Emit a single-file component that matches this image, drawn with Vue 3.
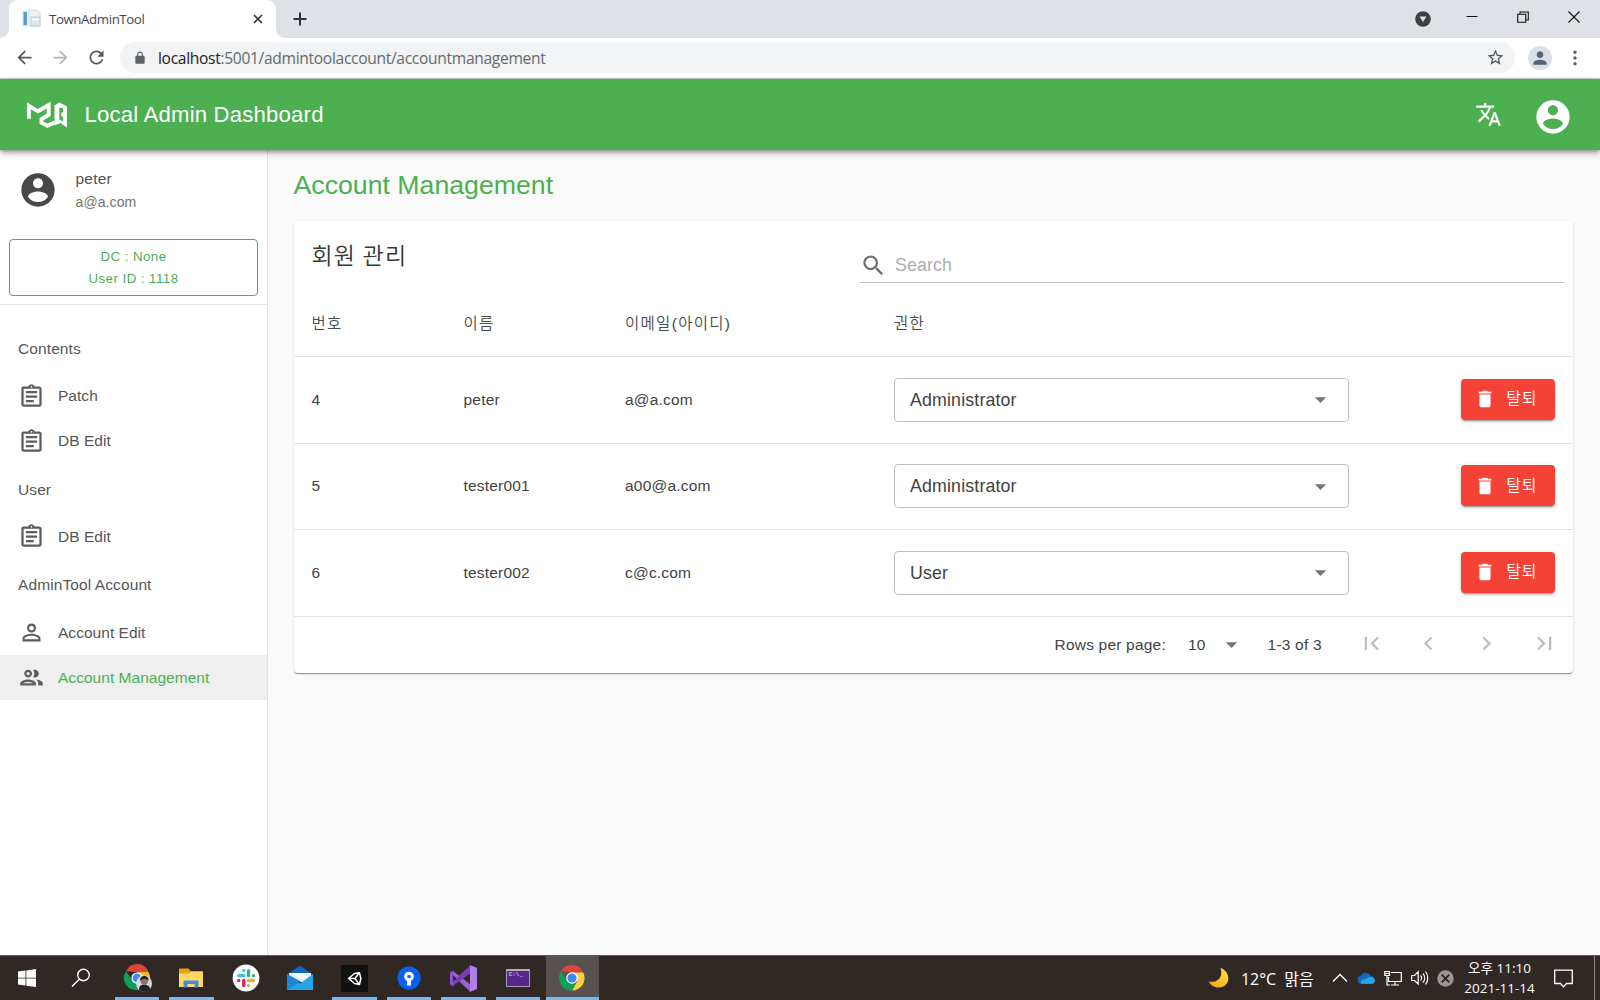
<script setup>
const icons = {
  account: 'M12 2C6.48 2 2 6.48 2 12s4.48 10 10 10 10-4.48 10-10S17.52 2 12 2zm0 3c1.66 0 3 1.34 3 3s-1.34 3-3 3-3-1.34-3-3 1.34-3 3-3zm0 14.2c-2.5 0-4.71-1.28-6-3.22.03-1.99 4-3.08 6-3.08 1.99 0 5.97 1.09 6 3.08-1.29 1.94-3.5 3.22-6 3.22z',
  translate: 'M12.87 15.07l-2.54-2.51.03-.03c1.74-1.94 2.98-4.17 3.71-6.53H17V4h-7V2H8v2H1v1.99h11.17C11.5 7.92 10.44 9.75 9 11.35 8.07 10.32 7.3 9.19 6.69 8h-2c.73 1.63 1.73 3.17 2.98 4.56l-5.09 5.02L4 19l5-5 3.11 3.11.76-2.04zM18.5 10h-2L12 22h2l1.12-3h4.75L21 22h2l-4.5-12zm-2.62 7l1.62-4.33L19.12 17h-3.24z',
  assignment: 'M7 15h7v2H7zm0-4h10v2H7zm0-4h10v2H7zm12-4h-4.18C14.4 1.84 13.3 1 12 1c-1.3 0-2.4.84-2.82 2H5c-.14 0-.27.01-.4.04-.39.08-.74.28-1.01.55-.18.18-.33.4-.43.64-.1.23-.16.49-.16.77v14c0 .27.06.54.16.78s.25.45.43.64c.27.27.62.47 1.01.55.13.02.26.03.4.03h14c1.1 0 2-.9 2-2V5c0-1.1-.9-2-2-2zm-7-.25c.41 0 .75.34.75.75s-.34.75-.75.75-.75-.34-.75-.75.34-.75.75-.75zM19 19H5V5h14v14z',
  person: 'M12 5.9c1.16 0 2.1.94 2.1 2.1s-.94 2.1-2.1 2.1S9.9 9.16 9.9 8s.94-2.1 2.1-2.1m0 9c2.97 0 6.1 1.46 6.1 2.1v1.1H5.9V17c0-.64 3.13-2.1 6.1-2.1M12 4C9.79 4 8 5.79 8 8s1.79 4 4 4 4-1.79 4-4-1.79-4-4-4zm0 9c-2.67 0-8 1.34-8 4v3h16v-3c0-2.66-5.33-4-8-4z',
  people: 'M9 13.75c-2.34 0-7 1.17-7 3.5V19h14v-1.75c0-2.33-4.66-3.5-7-3.5zM4.34 17c.84-.58 2.87-1.25 4.66-1.25s3.82.67 4.66 1.25H4.34zM9 12c1.93 0 3.5-1.57 3.5-3.5S10.93 5 9 5 5.5 6.57 5.5 8.5 7.07 12 9 12zm0-5c.83 0 1.5.67 1.5 1.5S9.83 10 9 10s-1.5-.67-1.5-1.5S8.17 7 9 7zm7.04 6.81c1.16.84 1.96 1.96 1.96 3.44V19h4v-1.75c0-2.02-3.5-3.17-5.96-3.44zM15 12c1.93 0 3.5-1.57 3.5-3.5S16.93 5 15 5c-.54 0-1.04.13-1.5.35.63.89 1 1.98 1 3.15s-.37 2.26-1 3.15c.46.22.96.35 1.5.35z',
  search: 'M15.5 14h-.79l-.28-.27C15.41 12.59 16 11.11 16 9.5 16 5.91 13.09 3 9.5 3S3 5.91 3 9.5 5.91 16 9.5 16c1.61 0 3.09-.59 4.23-1.57l.27.28v.79l5 4.99L20.49 19l-4.99-5zm-6 0C7.01 14 5 11.99 5 9.5S7.01 5 9.5 5 14 7.01 14 9.5 11.99 14 9.5 14z',
  trash: 'M6 19c0 1.1.9 2 2 2h8c1.1 0 2-.9 2-2V7H6v12zM19 4h-3.5l-1-1h-5l-1 1H5v2h14V4z',
  drop: 'M7 10l5 5 5-5z',
  lock: 'M18 8h-1V6c0-2.76-2.24-5-5-5S7 3.24 7 6v2H6c-1.1 0-2 .9-2 2v10c0 1.1.9 2 2 2h12c1.1 0 2-.9 2-2V10c0-1.1-.9-2-2-2zM8.9 8V6c0-1.71 1.39-3.1 3.1-3.1s3.1 1.39 3.1 3.1v2H8.9z',
  back: 'M20 11H7.83l5.59-5.59L12 4l-8 8 8 8 1.41-1.41L7.83 13H20v-2z',
  forward: 'M12 4l-1.41 1.41L16.17 11H4v2h12.17l-5.58 5.59L12 20l8-8z',
  reload: 'M17.65 6.35C16.2 4.9 14.21 4 12 4c-4.42 0-7.99 3.58-7.99 8s3.57 8 7.99 8c3.73 0 6.84-2.55 7.73-6h-2.08c-.82 2.33-3.04 4-5.65 4-3.31 0-6-2.69-6-6s2.69-6 6-6c1.66 0 3.14.69 4.22 1.78L13 11h7V4l-2.35 2.35z',
  star: 'M22 9.24l-7.19-.62L12 2 9.19 8.63 2 9.24l5.46 4.73L5.82 21 12 17.27 18.18 21l-1.63-7.03L22 9.24zM12 15.4l-3.76 2.27 1-4.28-3.32-2.88 4.38-.38L12 6.1l1.71 4.04 4.38.38-3.32 2.88 1 4.28L12 15.4z',
  user: 'M12 12c2.21 0 4-1.79 4-4s-1.79-4-4-4-4 1.79-4 4 1.79 4 4 4zm0 2c-2.67 0-8 1.34-8 4v2h16v-2c0-2.66-5.33-4-8-4z'
}
const nav = [
  { head: 'Contents' },
  { label: 'Patch', icon: icons.assignment },
  { label: 'DB Edit', icon: icons.assignment },
  { head: 'User' },
  { label: 'DB Edit', icon: icons.assignment },
  { head: 'AdminTool Account' },
  { label: 'Account Edit', icon: icons.person },
  { label: 'Account Management', icon: icons.people, active: true }
]
const rows = [
  { no: 4, name: 'peter', mail: 'a@a.com', role: 'Administrator' },
  { no: 5, name: 'tester001', mail: 'a00@a.com', role: 'Administrator' },
  { no: 6, name: 'tester002', mail: 'c@c.com', role: 'User' }
]
const pager = [
  'M18.41 16.59L13.82 12l4.59-4.59L17 6l-6 6 6 6zM6 6h2v12H6z',
  'M15.41 7.41L14 6l-6 6 6 6 1.41-1.41L10.83 12z',
  'M10 6L8.59 7.41 13.17 12l-4.58 4.59L10 18l6-6z',
  'M5.59 7.41L10.18 12l-4.59 4.59L7 18l6-6-6-6zM16 6h2v12h-2z'
]
</script>

<template>
  <div class="screen">
    <div class="tabs">
      <div class="tab">
        <svg class="fav" viewBox="0 0 20 20" width="20" height="20">
          <rect x="1" y="2" width="12" height="15" fill="#eef2f6" stroke="#d3dbe3" stroke-width=".7" />
          <rect x="1.5" y="3" width="3.4" height="13" fill="#4f9dcc" />
          <path d="M7 1h7l4 3v13H7z" fill="#eef3f7" stroke="#cbd5de" stroke-width=".8" />
          <path d="M9 8h9v9H9z" fill="#dfe6ec" stroke="#b9c3cc" stroke-width=".8" />
          <path d="M10 9.5h7v2h-7z" fill="#fff" />
        </svg>
        <span class="tab-title">TownAdminTool</span>
        <svg class="tab-x" viewBox="0 0 10 10" width="10" height="10"><path d="M1 1l8 8M9 1L1 9" stroke="#303236" stroke-width="1.6" /></svg>
      </div>
      <svg class="plus" viewBox="0 0 14 14" width="14" height="14"><path d="M7 .5v13M.5 7h13" stroke="#303236" stroke-width="2" /></svg>
      <div class="winbtns">
        <span class="wb first"><svg viewBox="0 0 16 16" width="16" height="16"><circle cx="8" cy="8" r="7.8" fill="#3c4043" /><path d="M4.6 5.6h6.8L8 11z" fill="#dee1e6" /></svg></span>
        <span class="wb"><svg viewBox="0 0 12 12" width="12" height="12"><path d="M.5 5.500h11" stroke="#111" /></svg></span>
        <span class="wb"><svg viewBox="0 0 12 12" width="12" height="12"><path d="M.7 3.3h8v8h-8zM3 3V1h8.300v8H9" fill="none" stroke="#111" stroke-width="1.1" /></svg></span>
        <span class="wb"><svg viewBox="0 0 12 12" width="12" height="12"><path d="M.5.5l11 11M11.500.5l-11 11" stroke="#111" stroke-width="1.1" /></svg></span>
      </div>
    </div>
    <div class="toolbar">
      <svg class="tb" viewBox="0 0 24 24"><path :d="icons.back" fill="#54585d" /></svg>
      <svg class="tb" viewBox="0 0 24 24"><path :d="icons.forward" fill="#b5b7ba" /></svg>
      <svg class="tb" viewBox="0 0 24 24"><path :d="icons.reload" fill="#54585d" /></svg>
      <div class="omni">
        <svg class="lock" viewBox="0 0 24 24" width="14" height="14"><path :d="icons.lock" fill="#5f6368" /></svg>
        <span class="url"><b>localhost</b>:5001/admintoolaccount/accountmanagement</span>
        <svg class="star" viewBox="0 0 24 24" width="19" height="19"><path :d="icons.star" fill="#54585d" /></svg>
      </div>
      <span class="chip"><svg viewBox="0 0 24 24" width="20" height="20"><path :d="icons.user" fill="#56617a" /></svg></span>
      <svg class="dots" viewBox="0 0 4 16" width="4" height="16"><g fill="#5f6368"><circle cx="2" cy="2.200" r="1.700" /><circle cx="2" cy="8" r="1.700" /><circle cx="2" cy="13.800" r="1.700" /></g></svg>
    </div>

    <header class="appbar">
      <svg class="logo" viewBox="0 0 42 26" width="42" height="26">
        <path d="M2.900 16.800V3.800L12 9.300 22.700 3V12.800L15.500 17V20.800L21.500 23.800 28.500 20.500" fill="none" stroke="#fff" stroke-width="3.900" />
        <path fill-rule="evenodd" d="M28.500 3.200L33.500.6 41 4.600V25.500L34.500 21 28.500 23.500zM33.300 5.500V17.500L37 19.500V14.500H35.300V10.500H37V6.200z" fill="#fff" />
      </svg>
      <span class="brand">Local Admin Dashboard</span>
      <svg class="tr" viewBox="0 0 24 24" width="27" height="27"><path :d="icons.translate" fill="#fff" /></svg>
      <svg class="acc" viewBox="0 0 24 24" width="40" height="40"><path :d="icons.account" fill="#fff" /></svg>
    </header>

    <div class="body">
      <aside class="drawer">
        <div class="me">
          <svg viewBox="0 0 24 24" width="40" height="40"><path :d="icons.account" fill="#484848" /></svg>
          <div class="who"><span class="nm">peter</span><span class="ml">a@a.com</span></div>
        </div>
        <div class="dc"><span>DC : None</span><span>User ID : 1118</span></div>
        <nav>
          <template v-for="(n, i) in nav" :key="i">
            <div v-if="n.head" class="head">{{ n.head }}</div>
            <div v-else class="item" :class="{ active: n.active }">
              <svg viewBox="0 0 24 24" width="27" height="27"><path :d="n.icon" fill="#5c5c5c" /></svg>
              <span>{{ n.label }}</span>
            </div>
          </template>
        </nav>
      </aside>
      <main>
        <h1>Account Management</h1>
        <section class="card">
          <div class="top">
            <h2>회원 관리</h2>
            <div class="search">
              <svg viewBox="0 0 24 24" width="27" height="27"><path :d="icons.search" fill="#6f6f6f" /></svg>
              <span>Search</span>
            </div>
          </div>
          <div class="row th">
            <span>번호</span><span>이름</span><span>이메일(아이디)</span><span>권한</span>
          </div>
          <div v-for="r in rows" :key="r.no" class="row">
            <span>{{ r.no }}</span><span>{{ r.name }}</span><span>{{ r.mail }}</span>
            <div class="select">
              <span>{{ r.role }}</span>
              <svg viewBox="0 0 24 24" width="27" height="27"><path :d="icons.drop" fill="#757575" /></svg>
            </div>
            <button><svg viewBox="0 0 24 24" width="22" height="22"><path :d="icons.trash" fill="#fff" /></svg><span>탈퇴</span></button>
          </div>
          <div class="foot">
            <span class="rpp">Rows per page:</span>
            <span class="ten">10</span>
            <svg class="fd" viewBox="0 0 24 24" width="27" height="27"><path :d="icons.drop" fill="#757575" /></svg>
            <span class="range">1-3 of 3</span>
            <span v-for="(p, i) in pager" :key="i" class="pg"><svg viewBox="0 0 24 24" width="27" height="27"><path :d="p" fill="#bdbdbd" /></svg></span>
          </div>
        </section>
      </main>
    </div>

    <footer class="taskbar">
      <div class="cell"><svg viewBox="0 0 18 18" width="18" height="18"><path d="M0 2.500L7.500 1.500V8.700H0zM8.300 1.400L18 0V8.700H8.300zM0 9.400H7.500V16.600L0 15.500zM8.300 9.400H18V18L8.300 16.700z" fill="#fff" /></svg></div>
      <div class="cell find"><svg viewBox="0 0 20 20" width="20" height="20" fill="none" stroke="#fff" stroke-width="1.400"><circle cx="12.500" cy="7" r="5.800" /><path d="M8.300 11.200L1 18.500" /></svg></div>
      <div class="cell on">
        <svg class="duo" viewBox="0 0 30 28" width="30" height="28">
          <path d="M3.100 7.200A12 12 0 0 1 25.400 8H14z" fill="#db4437" /><path d="M25.400 8A12 12 0 0 1 14 26l5.200-9L14 8z" fill="#fbbc2d" /><path d="M3.100 7.200A12 12 0 0 0 14 26l5.500-9.300-10-.2z" fill="#109d58" />
          <circle cx="14" cy="14" r="5.600" fill="#fff" /><circle cx="14" cy="14" r="4.400" fill="#4285f4" />
          <circle cx="21" cy="19.500" r="8" fill="#d8d9dc" /><path d="M16 25.800c0-4 2-5 5-5s6 1 6 4.400a8 8 0 0 1-11 .6z" fill="#202227" /><ellipse cx="21.300" cy="16.800" rx="3.700" ry="4.200" fill="#8f7069" /><path d="M17 16.800c-.8-6 8.800-7 8.800 0-2-2.200-6-2.500-8.800 0z" fill="#292426" />
        </svg>
      </div>
      <div class="cell on"><svg viewBox="0 0 24 20" width="24" height="20"><path d="M0 1.500Q0 .5 1 .5H9.500L11.500 3H23q1 0 1 1V19H0z" fill="#e8a30c" /><path d="M0 5.500h9.500L12 4H24V19H0z" fill="#ffd867" /><path d="M4.500 19.500V13.500q0-1 1-1h13q1 0 1 1v6h-4V16h-7v3.500z" fill="#3f8fdc" /></svg></div>
      <div class="cell"><svg viewBox="0 0 28 28" width="28" height="28"><circle cx="14" cy="14" r="13.400" fill="#fff" /><g stroke-width="3.300" stroke-linecap="round"><path d="M11.800 6.500v0M6.800 11.700h5" stroke="#36c5f0" /><path d="M16.500 6.700v5M21.500 11.700v0" stroke="#2eb67d" /><path d="M16.500 16.500h5M16.500 21.500v0" stroke="#ecb22e" /><path d="M11.800 16.500v5M6.800 16.500v0" stroke="#e01e5a" /></g></svg></div>
      <div class="cell"><svg viewBox="0 0 28 26" width="28" height="26"><path d="M1 9.500L14 .5l13 9z" fill="#1266b8" /><path d="M3 8h22v9H3z" fill="#f1f5f8" /><path d="M1 9l13 9.500L27 9v16H1z" fill="#25a5e5" /><path d="M3 8.800h22L14 16.800z" fill="#f1f5f8" /><path d="M1 9v16L15 16.500z" fill="#1b86d8" /></svg></div>
      <div class="cell on"><svg viewBox="0 0 27 27" width="27" height="27"><rect width="27" height="27" fill="#111" /><path d="M18.500 7.800L13.500 8.500 7.500 13.500 13.500 18.500 18.500 19.500 19.800 13.500zM8 13.500H14M14 13.500L18 8M14 13.500L18 19" fill="none" stroke="#fff" stroke-width="1.500" stroke-linejoin="round" /></svg></div>
      <div class="cell on"><svg viewBox="0 0 24 24" width="24" height="24"><circle cx="12" cy="12" r="11.600" fill="#0b5fee" /><circle cx="12" cy="10.500" r="4.800" fill="#fff" /><path d="M10.100 13.500h3.800v6h-3.800z" fill="#fff" /><circle cx="12" cy="10.500" r="1.800" fill="#0b5fee" /></svg></div>
      <div class="cell on"><svg viewBox="0 0 27 27" width="27" height="27"><path d="M0 7.500L3 6 20.500 19.500 20.500 27z" fill="#9b5fd8" /><path d="M0 19.500L3 21 20.500 8V0z" fill="#7b3bb9" /><path d="M0 7.500L3 6 3 21 0 19.500z" fill="#8f52cc" /><path d="M20 0l7 3v21l-7 3z" fill="#b07ee8" /><path d="M3 10.500v6l3.300-3z" fill="#302926" /></svg></div>
      <div class="cell on"><svg viewBox="0 0 24 18" width="24" height="18"><rect x=".5" y=".5" width="23" height="17" fill="#55268c" stroke="#a79cab" /><path d="M.5 1.200h23" stroke="#bdb5c2" stroke-width="1.500" /></svg><span class="prompt">C:\_</span></div>
      <div class="cell on cur">
        <svg viewBox="0 0 26 26" width="26" height="26">
          <path d="M2.100 6.200A12.500 12.500 0 0 1 24.300 7.500H13z" fill="#db4437" /><path d="M24.300 7.500A12.500 12.500 0 0 1 13 25.500l5.200-9.500L13 7.500z" fill="#ffcd40" /><path d="M2.100 6.200A12.500 12.500 0 0 0 13 25.500l5.300-9.500-10-.2z" fill="#109d58" />
          <circle cx="13" cy="13" r="5.800" fill="#fff" /><circle cx="13" cy="13" r="4.600" fill="#4285f4" />
        </svg>
      </div>
      <div class="tray">
        <svg class="moon" viewBox="0 0 22 22" width="22" height="22"><defs><linearGradient id="mg" x1="0" y1="1" x2="1" y2="0"><stop offset="0" stop-color="#f6a018" /><stop offset="1" stop-color="#ffe43c" /></linearGradient></defs><path d="M12.500 1C24 5 22.500 20.500 10.500 20.500 6 20.500 2.500 18 .8 14.500 9.500 16.500 15.500 10 12.500 1z" fill="url(#mg)" /></svg>
        <span class="weather">12°C&nbsp; 맑음</span>
        <svg class="ti up" viewBox="0 0 16 16" width="16" height="16"><path d="M1 11.500L8 4.500l7 7" fill="none" stroke="#fff" stroke-width="1.300" /></svg>
        <svg class="ti" viewBox="0 0 18 12" width="18" height="12"><path d="M4 11.800A4 4 0 0 1 3.600 4 5.200 5.200 0 0 1 13 3.500 4.200 4.200 0 0 1 14 11.800z" fill="#1068bd" /><path d="M4.200 11.800C2.800 10 5 6.800 7.500 7.500L12 5.200c3-1 6 .8 6 3.500 0 2-1.500 3.100-3.500 3.100z" fill="#2aa4ec" /></svg>
        <svg class="ti" viewBox="0 0 18 16" width="18" height="16" fill="none" stroke="#fff" stroke-width="1.200"><path d="M7 2.500H17.300V11.500H4.500V7M11 11.500V15M7 15h8M.8 1.500h4.700v4H.8zM1.500 3.500h4M3 5.500V15H6" /></svg>
        <svg class="ti vol" viewBox="0 0 18 16" width="18" height="16" fill="none" stroke="#fff" stroke-width="1.200"><path d="M.7 5.500H3.500L7.200 1.800V14L3.500 10.500H.7zM9.500 5.500a3.700 3.700 0 0 1 0 5M12 3.500a7 7 0 0 1 0 9M14.500 1.500a10.500 10.500 0 0 1 0 13" /></svg>
        <svg class="ti xc" viewBox="0 0 18 18" width="17" height="17"><circle cx="9" cy="9" r="8.700" fill="#9a9795" /><path d="M5 5l8 8M13 5l-8 8" stroke="#29231f" stroke-width="1.900" /></svg>
        <div class="clock"><span>오후 11:10</span><span>2021-11-14</span></div>
        <svg class="note" viewBox="0 0 19 19" width="19" height="19"><path d="M.7 1.200H18.300V14.500H12.500L9.500 17.800 6.500 14.500H.7z" fill="none" stroke="#fff" stroke-width="1.300" /></svg>
        <span class="desk"></span>
      </div>
    </footer>
  </div>
</template>

<style>
body { margin: 0; overflow: hidden; }
</style>

<style scoped>
* { box-sizing: border-box; }
svg { display: block; flex: none; }
span { white-space: nowrap; }
.screen { width: 1600px; height: 1000px; display: flex; flex-direction: column; overflow: hidden; background: #fafafa; font-family: "Liberation Sans", "Noto Sans CJK KR", sans-serif; color: #424242; }
.tabs { height: 38px; flex: none; display: flex; align-items: center; background: #dee1e6; }
.tab { position: relative; width: 267px; height: 38px; margin-left: 9px; padding: 0 13px 0 13px; display: flex; align-items: center; background: #fff; border-radius: 9px 9px 0 0; }
.tab::before, .tab::after { content: ""; position: absolute; bottom: 0; width: 9px; height: 9px; }
.tab::before { left: -9px; background: radial-gradient(circle at 0 0, transparent 8.500px, #fff 9px); }
.tab::after { right: -9px; background: radial-gradient(circle at 100% 0, transparent 8.500px, #fff 9px); }
.tab-title { margin-left: 7px; font: 13.300px "Open Sans", sans-serif; color: #45484c; letter-spacing: -.42px; }
.tab-x { margin-left: auto; }
.plus { margin-left: 17px; }
.winbtns { margin-left: auto; display: flex; align-items: center; height: 38px; padding: 0 1px 5px 0; }
.wb { width: 51px; display: flex; justify-content: center; }
.wb.first { width: 46px; padding-top: 5px; margin-right: 0; }
.toolbar { height: 41px; flex: none; display: flex; align-items: center; padding: 0 0 1px 14px; background: #fff; border-bottom: 1px solid #cfcfcf; }
.tb { width: 21px; height: 21px; margin-right: 15px; }
.omni { width: 1395px; height: 31px; margin-left: -2px; border-radius: 16px; background: #f1f3f4; display: flex; align-items: center; padding: 0 10px 0 13px; }
.url { margin-left: 11px; font: 15.600px "Open Sans", sans-serif; letter-spacing: -.32px; color: #666a6e; }
.url b { font-weight: 400; color: #202124; }
.star { margin-left: auto; }
.chip { width: 24px; height: 24px; margin-left: 13px; border-radius: 50%; background: #dadee6; display: flex; align-items: center; justify-content: center; }
.dots { margin-left: 21px; }
.appbar { position: relative; z-index: 2; height: 71px; flex: none; display: flex; align-items: center; padding: 0 27px 0 26px; background: #4caf50; box-shadow: 0 2px 4px rgba(0,0,0,.3), 0 3px 8px rgba(0,0,0,.2); }
.brand { margin-left: 16.500px; font-size: 22.200px; letter-spacing: .17px; color: #fff; }
.tr { margin-left: auto; }
.acc { margin-left: 31px; margin-top: 4px; }
.body { flex: 1; display: flex; min-height: 0; }
.drawer { width: 268px; flex: none; background: #fff; border-right: 1px solid #e2e2e2; }
.me { height: 89px; display: flex; padding: 20px 0 0 18px; }
.who { display: flex; flex-direction: column; margin: -2px 0 0 17.500px; }
.nm { font-size: 15.500px; line-height: 22px; letter-spacing: .2px; color: #525252; }
.ml { font-size: 14px; line-height: 24px; letter-spacing: .1px; color: #727272; }
.dc { width: 249px; height: 57px; margin-left: 9px; padding: 6px 0; border: 1px solid #4caf50; border-radius: 4px; display: flex; flex-direction: column; align-items: center; color: #4caf50; font-size: 13.300px; line-height: 21.500px; letter-spacing: .45px; }
nav { margin-top: 8px; padding-top: 18px; border-top: 1px solid #e4e4e4; }
.head { height: 51px; line-height: 51px; padding-left: 18px; font-size: 15.500px; letter-spacing: .1px; color: #565656; }
.item { height: 44.800px; display: flex; align-items: center; padding-left: 18px; font-size: 15.500px; letter-spacing: .03px; color: #565656; }
.item span { margin-left: 13px; }
.item.active { background: #efefef; color: #4caf50; }
main { flex: 1; padding: 0 27px 0 25.500px; }
h1 { margin: 0; height: 71px; line-height: 70px; font-size: 26.700px; font-weight: 400; color: #4caf50; }
.card { height: 452px; background: #fff; border-radius: 4px; box-shadow: 0 2px 1px -1px rgba(0,0,0,.25), 0 1px 1px rgba(0,0,0,.16), 0 1px 3px rgba(0,0,0,.12); }
.top { height: 63px; display: flex; justify-content: space-between; padding: 0 9px 0 18px; }
h2 { margin: 16px 0 0; font-size: 23px; line-height: 34px; font-weight: 350; letter-spacing: 1.200px; font-family: "Noto Sans CJK KR", sans-serif; color: #383838; }
.search { width: 704px; height: 62px; padding-top: 27px; border-bottom: 1px solid #c4c4c4; display: flex; align-items: center; font-size: 17.800px; letter-spacing: .1px; color: #aeaeae; }
.search span { margin-left: 8px; }
.row { height: 86.600px; display: grid; grid-template-columns: 152px 161.500px 269px 455px 1fr; align-items: center; padding: 0 18px 0 18px; border-bottom: 1px solid #e2e2e2; font-size: 15.500px; letter-spacing: .2px; }
.row > span { padding-bottom: .5px; }
.th { height: 73px; font-weight: 350; padding-top: 5px; letter-spacing: 1.300px; color: #4a4a4a; }
.select { width: 455px; height: 44px; border: 1px solid #bfbfbf; border-radius: 4px; display: flex; align-items: center; justify-content: space-between; padding: 0 14px 0 15px; font-size: 17.800px; letter-spacing: .15px; }
.select span { padding-top: 1px; }
button { justify-self: end; width: 94px; height: 41px; margin-bottom: 1px; padding: 0 18px 0 13px; border: 0; border-radius: 4px; background: #f44336; color: #fff; display: flex; align-items: center; justify-content: space-between; font: 350 16px "Noto Sans CJK KR", sans-serif; letter-spacing: .6px; box-shadow: 0 3px 1px -2px rgba(0,0,0,.2), 0 2px 2px rgba(0,0,0,.14), 0 1px 5px rgba(0,0,0,.12); }
button span { padding-bottom: 4px; }
.foot { height: 56px; display: flex; align-items: center; justify-content: flex-end; font-size: 15.500px; letter-spacing: .2px; }
.ten { margin-left: 22px; }
.fd { margin-left: 12px; }
.range { margin: 0 20.500px 0 23px; }
.pg { width: 57.700px; display: flex; justify-content: center; padding-bottom: 3px; }
.taskbar { height: 45px; flex: none; display: flex; background: #302825; border-top: 1px solid #605b58; color: #fff; font-family: "Open Sans", "Noto Sans CJK KR", sans-serif; }
.cell { position: relative; width: 54.400px; flex: none; display: flex; align-items: center; justify-content: center; }
.cell.find { width: 55.500px; padding-right: 3px; }
.duo { margin-left: 2px; }
.cell.on::after { content: ""; position: absolute; left: 5px; right: 5px; bottom: 0; height: 3px; background: #76b9ed; }
.cell.cur { background: #57524f; width: 53px; margin-left: .5px; }
.cell.cur::after { left: 0; right: 0; }
.prompt { position: absolute; left: 18px; top: 15px; font: 6px "Liberation Mono", monospace; line-height: 7px; }
.tray { margin-left: auto; display: flex; align-items: center; }
.moon { margin-right: 1px; }
.weather { margin-left: 10px; width: 85px; font-size: 16px; font-weight: 400; letter-spacing: -.05px; }
.ti { margin-left: 9px; }
.up { margin-left: 6px; }
.vol { margin-left: 9px; }
.xc { margin-left: 8px; }
.clock { width: 91px; display: flex; flex-direction: column; align-items: center; font-size: 13.500px; line-height: 20.500px; }
.note { margin-left: 9px; }
.desk { width: 1px; height: 44px; margin: 0 5px 0 21px; background: #8b8785; }
</style>
